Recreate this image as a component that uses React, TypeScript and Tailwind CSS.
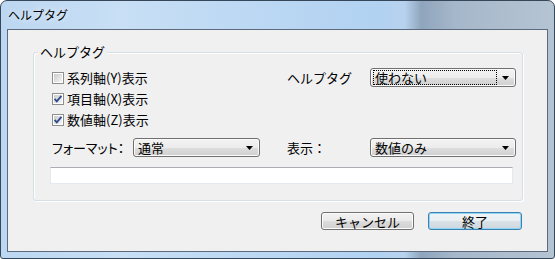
const font = "font-['Noto_Sans_CJK_JP',sans-serif]";

interface DropdownProps {
    value: string;
    width: string;
    focused?: boolean;
}

const Dropdown: React.FC<DropdownProps> = ({ value, width, focused }) => {
    return (
        <div
            className={`flex h-[19px] ${width} items-center rounded-[3px] border border-[#707070] bg-[linear-gradient(#f3f3f3,#ececec_50%,#dedede_50%,#d0d0d0)] pl-[2px] pr-[6px] shadow-[inset_0_0_0_1px_#fbfbfb]`}
        >
            <div
                className={
                    focused
                        ? "flex h-[15px] flex-1 items-center border border-dotted border-black pl-[1px]"
                        : "flex h-[15px] flex-1 items-center border border-transparent pl-[1px]"
                }
            >
                <span className="whitespace-nowrap text-[13px] leading-none text-black">{value}</span>
            </div>
            <svg width="7" height="4" className="ml-[5px]">
                <path d="M0 0h7L3.5 4z" fill="#000" />
            </svg>
        </div>
    );
};

const CheckBox: React.FC<{ checked: boolean }> = ({ checked }) => {
    return (
        <svg width="12" height="12" className="shrink-0">
            <defs>
                <linearGradient id={checked ? "cbOn" : "cbOff"} x1="0" y1="0" x2="1" y2="1">
                    <stop offset="0" stopColor="#cbcbcb" />
                    <stop offset="1" stopColor="#f6f6f6" />
                </linearGradient>
            </defs>
            <rect x="0.5" y="0.5" width="11" height="11" fill="#fff" stroke="#8f8f8f" />
            <rect x="2" y="2" width="8" height="8" fill={checked ? "url(#cbOn)" : "url(#cbOff)"} />
            {checked && (
                <path
                    d="M2.6 5.8 L4.8 8.3 L9.4 2.8"
                    fill="none"
                    stroke="#2c4a8c"
                    strokeWidth="1.8"
                />
            )}
        </svg>
    );
};

const CheckRow: React.FC<{ checked: boolean; label: string }> = ({ checked, label }) => {
    return (
        <div className="flex h-[21px] items-center gap-[3px] pl-[2px]">
            <CheckBox checked={checked} />
            <span className="whitespace-nowrap text-[13px] leading-none">{label}</span>
        </div>
    );
};

export default function App() {
    return (
        <div className={`h-[259px] w-[555px] ${font} text-black`}>
            <div className="flex h-[259px] w-[555px] flex-col rounded-t-[7px] rounded-b-[3px] border border-[#37475a] bg-[linear-gradient(90deg,#bcd7f1_0%,#c8dff5_22%,#bcd8f3_45%,#b2d2f2_68%,#b7d2ee_73%,#8fa5bc_76%,#a5b7ca_82%,#b5c4d3_100%)]">
                {/* title bar */}
                <div className="flex h-[28px] items-center pl-[7px] text-[12px] [text-shadow:0_0_6px_#ffffff]">
                    ヘルプタグ
                </div>

                {/* client area */}
                <div className="mx-[6px] mb-[6px] flex flex-1 flex-col border border-[#5b6b7d] bg-[#f0f0f0]">
                    <div className="relative ml-[25px] mt-[22px] h-[149px] w-[490px] rounded-[3px] border border-[#d5dfe5] pl-[16px] pt-[14px] shadow-[1px_1px_0_#ffffff,inset_1px_1px_0_#ffffff]">
                        <span className="absolute left-[4px] top-[-8px] bg-[#f0f0f0] px-[2px] text-[13px] leading-[14px]">
                            ヘルプタグ
                        </span>

                        <div className="flex">
                            <div className="flex w-[237px] flex-col">
                                <CheckRow checked={false} label="系列軸(Y)表示" />
                                <CheckRow checked={true} label="項目軸(X)表示" />
                                <CheckRow checked={true} label="数値軸(Z)表示" />
                            </div>
                            <div className="flex h-[21px] items-center">
                                <span className="w-[83px] whitespace-nowrap text-[13px] leading-none">ヘルプタグ</span>
                                <Dropdown value="使わない" width="w-[146px]" focused />
                            </div>
                        </div>

                        <div className="mt-[8px] flex h-[19px] items-center">
                            <div className="flex w-[237px] items-center pl-[2px]">
                                <span className="w-[81px] whitespace-nowrap text-[13px] leading-none [font-feature-settings:'palt']">
                                    フォーマット：
                                </span>
                                <Dropdown value="通常" width="w-[127px]" />
                            </div>
                            <span className="w-[83px] whitespace-nowrap text-[13px] leading-none">表示：</span>
                            <Dropdown value="数値のみ" width="w-[146px]" />
                        </div>

                        <div className="mt-[10px] h-[17px] w-[463px] border border-[#e3e9ef] border-t-[#abadb3] bg-white" />
                    </div>

                    <div className="mr-[25px] mt-[11px] flex justify-end gap-[14px]">
                        <button className="h-[18px] w-[93px] rounded-[3px] border border-[#707070] bg-[linear-gradient(#f2f2f2,#ebebeb_50%,#dddddd_50%,#cfcfcf)] text-[13px] leading-none shadow-[inset_0_0_0_1px_#fcfcfc]">
                            キャンセル
                        </button>
                        <button className="h-[18px] w-[94px] rounded-[3px] border border-[#3c7fb1] bg-[linear-gradient(#f0f4f6,#e8eef1_50%,#dae2e7_50%,#cdd7dd)] text-[13px] leading-none shadow-[inset_0_0_0_1px_#8fd6f6]">
                            終了
                        </button>
                    </div>
                </div>
            </div>
        </div>
    );
}
